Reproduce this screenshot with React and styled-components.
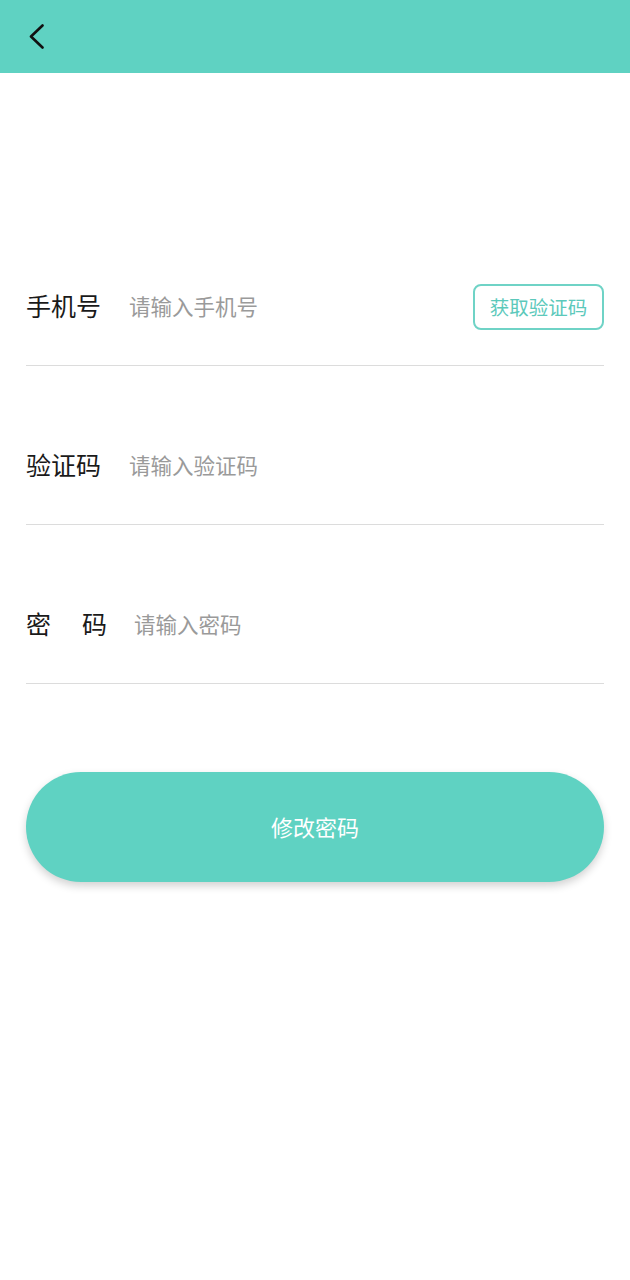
import React from "react";
import styled, { createGlobalStyle } from "styled-components";

const GlobalStyle = createGlobalStyle`
  html, body {
    margin: 0;
    padding: 0;
    background: #ffffff;
  }
  body {
    font-family: "Noto Sans CJK SC", "Noto Sans", sans-serif;
  }
  * {
    box-sizing: border-box;
  }
`;

const Page = styled.div`
  width: 630px;
  min-height: 1280px;
  background: #ffffff;
`;

const Header = styled.div`
  height: 73px;
  background: #5fd2c2;
  display: flex;
  align-items: center;
  padding-left: 24px;
`;

const BackButton = styled.button`
  width: 26px;
  height: 36px;
  padding: 0;
  border: none;
  background: transparent;
  display: flex;
  align-items: center;
  justify-content: center;
  cursor: pointer;
`;

const Form = styled.div`
  padding: 134px 26px 0;
`;

const Row = styled.div`
  display: flex;
  align-items: center;
  height: 159px;
  padding: 77px 0 35px;
  border-bottom: 1px solid #dcdcdc;
`;

const Label = styled.span`
  flex: none;
  width: ${({ wide }) => (wide ? "81px" : "auto")};
  font-size: 25px;
  line-height: 46px;
  color: #1a1a1a;
  position: relative;
  top: -2px;
  text-align: ${({ wide }) => (wide ? "justify" : "left")};
  text-align-last: ${({ wide }) => (wide ? "justify" : "auto")};
  margin-right: ${({ wide }) => (wide ? "27px" : "28px")};
`;

const Input = styled.input`
  flex: 1;
  min-width: 0;
  height: 46px;
  border: none;
  outline: none;
  background: transparent;
  padding: 0 0 3px;
  font-family: inherit;
  font-size: 21.5px;
  color: #333;
  &::placeholder {
    color: #9a9a9a;
  }
`;

const CodeButton = styled.button`
  flex: none;
  width: 131px;
  height: 46px;
  border: 2px solid #6fd3c6;
  border-radius: 8px;
  background: #ffffff;
  color: #5cc9bb;
  font-family: inherit;
  font-size: 19.5px;
  padding: 0 0 2px;
  cursor: pointer;
`;

const Submit = styled.button`
  display: block;
  width: 578px;
  height: 110px;
  margin: 88px 26px 0;
  border: none;
  border-radius: 55px;
  background: #5fd2c2;
  color: #ffffff;
  font-family: inherit;
  font-size: 22px;
  padding: 0 0 2px;
  box-shadow: 0 4px 8px rgba(0, 0, 0, 0.18);
  cursor: pointer;
`;

const fields = [
  { label: "手机号", placeholder: "请输入手机号", code: true },
  { label: "验证码", placeholder: "请输入验证码" },
  { label: "密码", placeholder: "请输入密码", wide: true, type: "password" },
];

export default function App() {
  return (
    <Page>
      <GlobalStyle />
      <Header>
        <BackButton aria-label="返回">
          <svg width="16" height="26" viewBox="0 0 16 26" fill="none">
            <polyline
              points="13.5,1.5 2,12.5 13.5,23.5"
              stroke="#111"
              strokeWidth="2.6"
              strokeLinecap="round"
              strokeLinejoin="round"
            />
          </svg>
        </BackButton>
      </Header>
      <Form>
        {fields.map((f) => (
          <Row key={f.label}>
            <Label wide={f.wide}>{f.wide ? "密 码" : f.label}</Label>
            <Input type={f.type || "text"} placeholder={f.placeholder} />
            {f.code && <CodeButton>获取验证码</CodeButton>}
          </Row>
        ))}
      </Form>
      <Submit>修改密码</Submit>
    </Page>
  );
}
